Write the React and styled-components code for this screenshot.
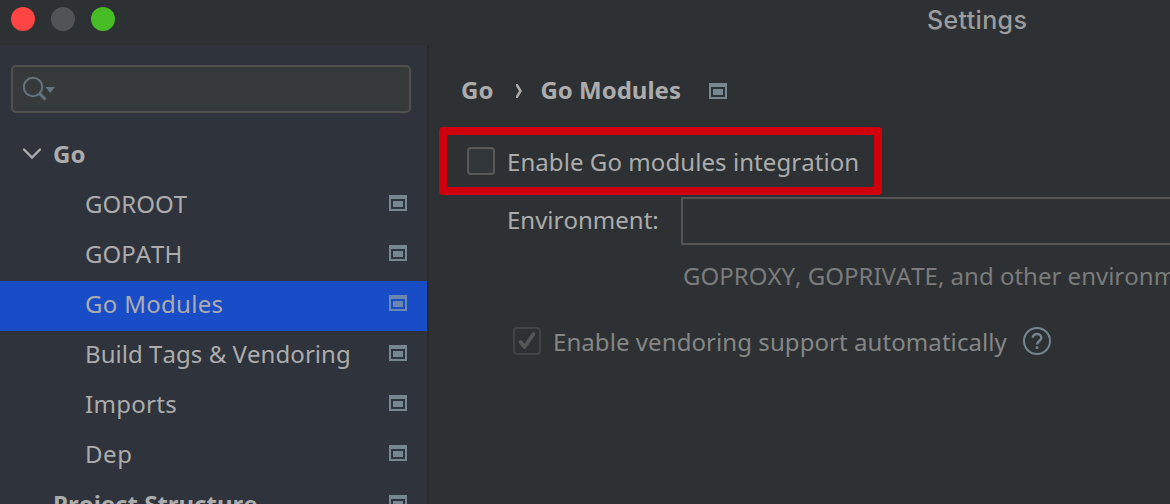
import React from "react";
import styled, { createGlobalStyle } from "styled-components";

const GlobalStyle = createGlobalStyle`
  * { box-sizing: border-box; }
  body { margin: 0; background: #2d3133; overflow: hidden; }
`;

const Window = styled.div`
  width: 1170px;
  height: 504px;
  display: flex;
  flex-direction: column;
  overflow: hidden;
  background: #2d3133;
  color: #acacac;
  font-family: "Noto Sans", sans-serif;
  font-size: 24px;
  line-height: 34px;
  font-kerning: none;
  white-space: nowrap;
`;

const TitleBar = styled.header`
  flex: none;
  height: 45px;
  display: flex;
  align-items: flex-start;
  padding: 7px 0 0 11px;
`;

const Lights = styled.div`
  display: flex;
  gap: 16px;
  width: 916px;
`;

const Light = styled.span`
  width: 24px;
  height: 24px;
  border-radius: 50%;
  background: ${(p) => p.$color};
`;

const Title = styled.h1`
  margin: 0;
  font: 500 25px/26px Inter, sans-serif;
  letter-spacing: 0.35px;
  color: #9b9c9d;
`;

const Body = styled.div`
  flex: 1;
  min-height: 0;
  display: flex;
`;

const Sidebar = styled.nav`
  flex: none;
  width: 429px;
  padding-top: 20px;
  background: #2f333c;
  border-right: 2px solid #282829;
  overflow: hidden;
`;

const SearchBox = styled.div`
  width: 400px;
  height: 48px;
  margin: 0 0 18px 11px;
  padding: 9px 0 0 9px;
  border: 2px solid #51504f;
  border-radius: 5px;
  background: #363a3a;
`;

const TreeRow = styled.div`
  height: 50px;
  display: flex;
  align-items: center;
  padding: 0 20px 5px ${(p) => (p.$group ? 22 : 85)}px;
  font-weight: ${(p) => (p.$group ? 700 : 400)};
  background: ${(p) => (p.$selected ? "#194cc7" : "transparent")};
`;

const RowLabel = styled.span`
  flex: 1;
  letter-spacing: ${(p) => p.$spacing || 0}px;
`;

const RowIcon = styled.span`
  display: flex;
  margin-bottom: 2px;
`;

const ToggleSlot = styled.span`
  width: 31px;
  height: 20px;
  display: flex;
  align-items: center;
`;

const Content = styled.main`
  flex: 1;
  min-width: 0;
  position: relative;
  padding: 28px 0 0 32px;
`;

const Breadcrumb = styled.div`
  height: 34px;
  display: flex;
  align-items: center;
  font-weight: 700;
`;

const Separator = styled.svg`
  margin: 1px 18px 0 23px;
`;

const CrumbIcon = styled.span`
  display: flex;
  margin: 2px 0 0 28px;
`;

const OptionRow = styled.div`
  display: flex;
  align-items: center;
  height: 34px;
  margin-top: ${(p) => p.$top}px;
  padding-left: ${(p) => p.$indent}px;
  letter-spacing: 0.07px;
  color: ${(p) => (p.$disabled ? "#868686" : "inherit")};
`;

const CheckBox = styled.span`
  flex: none;
  width: 28px;
  height: 28px;
  margin: 0 12px 2px 0;
  border: 2px solid ${(p) => (p.$disabled ? "#424344" : "#5b5958")};
  border-radius: 4px;
  background: ${(p) => (p.$disabled ? "transparent" : "#323839")};
`;

const FieldRow = styled.div`
  display: flex;
  align-items: center;
  height: 48px;
  margin-top: 18px;
  padding-left: 46px;
`;

const FieldLabel = styled.label`
  flex: none;
  width: 174px;
  padding-bottom: 2px;
`;

const TextField = styled.div`
  flex: none;
  width: 520px;
  height: 48px;
  border: 2px solid #575554;
`;

const Hint = styled.div`
  margin-top: 14px;
  padding-left: 222px;
  color: #7b7b7b;
`;

const HelpIcon = styled.svg`
  flex: none;
  margin: 0 0 2px 16px;
`;

const Highlight = styled.div`
  position: absolute;
  left: 10px;
  top: 82px;
  width: 443px;
  height: 68px;
  border: 8px solid #d0000c;
  border-radius: 4px;
`;

function ProjectIcon({ color = "#778791" }) {
  return (
    <svg width="18" height="16" viewBox="0 0 18 16" fill={color}>
      <path fillRule="evenodd" d="M0 0H18V16H0ZM2 4V14H16V4Z" />
      <path d="M4 6H14V12H4Z" />
    </svg>
  );
}

const pages = [
  { name: "GOROOT" },
  { name: "GOPATH" },
  { name: "Go Modules", spacing: 0.3, selected: true },
  { name: "Build Tags & Vendoring", spacing: 0.05 },
  { name: "Imports", spacing: 0.3 },
  { name: "Dep", spacing: 0.6 },
];

export default function App() {
  return (
    <>
      <GlobalStyle />
      <Window>
        <TitleBar>
          <Lights>
            <Light $color="#ff4544" />
            <Light $color="#525354" />
            <Light $color="#48bc25" />
          </Lights>
          <Title>Settings</Title>
        </TitleBar>
        <Body>
          <Sidebar>
            <SearchBox>
              <svg width="36" height="28" viewBox="0 0 36 28" fill="none">
                <circle cx="11" cy="11" r="9.2" stroke="#65757f" strokeWidth="2" />
                <path d="M17.2 17.2L23.5 23.5" stroke="#65757f" strokeWidth="3" />
                <path d="M23.5 11H33L28.2 17Z" fill="#65757f" />
              </svg>
            </SearchBox>
            <TreeRow $group>
              <ToggleSlot>
                <svg width="20" height="14" viewBox="0 0 20 14" fill="none">
                  <path d="M2 2.5L10 10.5L18 2.5" stroke="#acacac" strokeWidth="2.4" strokeLinecap="round" />
                </svg>
              </ToggleSlot>
              <RowLabel>Go</RowLabel>
            </TreeRow>
            {pages.map((page) => (
              <TreeRow key={page.name} $selected={page.selected}>
                <RowLabel $spacing={page.spacing}>{page.name}</RowLabel>
                <RowIcon>
                  <ProjectIcon color={page.selected ? "#6c88af" : undefined} />
                </RowIcon>
              </TreeRow>
            ))}
            <TreeRow $group>
              <ToggleSlot />
              <RowLabel>Project Structure</RowLabel>
              <RowIcon>
                <ProjectIcon />
              </RowIcon>
            </TreeRow>
          </Sidebar>
          <Content>
            <Breadcrumb>
              <span>Go</span>
              <Separator width="6" height="14" viewBox="0 0 6 14" fill="#acacac">
                <path d="M0 0H1.7L6 7L1.7 14H0V12L3 7L0 2Z" />
              </Separator>
              <span>Go Modules</span>
              <CrumbIcon>
                <ProjectIcon />
              </CrumbIcon>
            </Breadcrumb>
            <OptionRow $top={38} $indent={6}>
              <CheckBox />
              <span>Enable Go modules integration</span>
            </OptionRow>
            <Highlight />
            <FieldRow>
              <FieldLabel>Environment:</FieldLabel>
              <TextField />
            </FieldRow>
            <Hint>GOPROXY, GOPRIVATE, and other environment variables</Hint>
            <OptionRow $top={32} $indent={52} $disabled>
              <CheckBox $disabled>
                <svg width="24" height="24" viewBox="0 0 24 24" fill="none" display="block">
                  <path d="M5.5 13L9.5 18L18.5 5" stroke="#555656" strokeWidth="3.8" strokeLinecap="round" strokeLinejoin="round" />
                </svg>
              </CheckBox>
              <span>Enable vendoring support automatically</span>
              <HelpIcon width="28" height="28" viewBox="0 0 28 28" fill="none" stroke="#738690">
                <circle cx="14" cy="14" r="13" strokeWidth="2" />
                <path d="M9.7 10.8C9.7 5.6 18.3 5.7 18.3 10.7C18.3 14 14 14 14 17.6" strokeWidth="2.4" />
                <path d="M12.7 20.7H15.3" strokeWidth="2.6" />
              </HelpIcon>
            </OptionRow>
          </Content>
        </Body>
      </Window>
    </>
  );
}
